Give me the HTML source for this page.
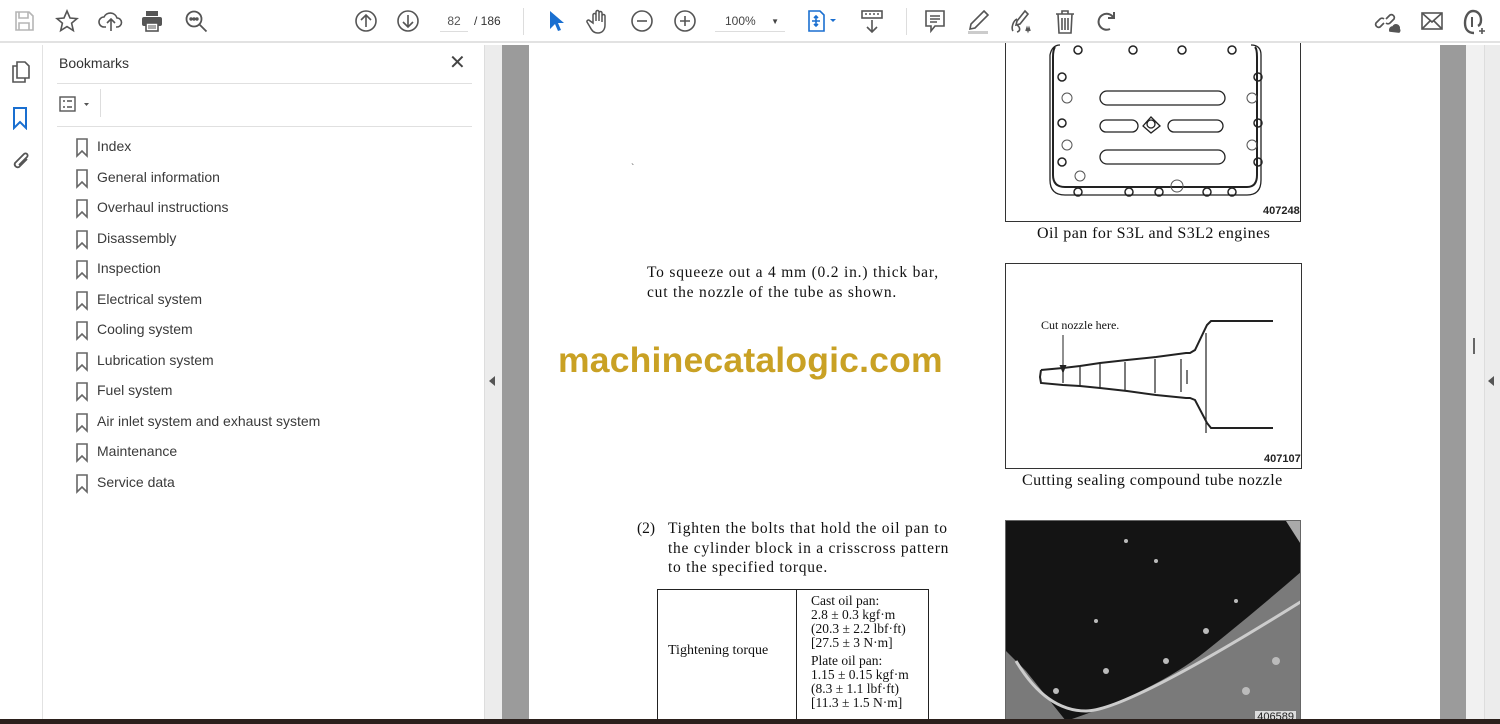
<!DOCTYPE html>
<html><head><meta charset="utf-8"><style>
*{margin:0;padding:0;box-sizing:border-box}
body{width:1500px;height:724px;overflow:hidden;background:#fff;font-family:"Liberation Sans",sans-serif;position:relative}
.abs{position:absolute}
.tb{top:0;left:0;width:1500px;height:43px;background:#fff;border-bottom:2px solid #e2e2e2}
.ic{position:absolute;top:9px}
.serif{font-family:"Liberation Serif",serif;color:#111}
.bm{position:absolute;left:75px;font-size:14px;color:#3a3a3a}
.bm svg{position:absolute;left:0;top:0}
.bm span{position:absolute;left:22px;top:0;white-space:nowrap}
</style></head><body>
<div class="abs tb">
<svg class="ic" style="left:12px" width="24" height="24" viewBox="0 0 24 24" fill="none" stroke="#b5b5b5" stroke-width="1.6"><path d="M4 3h13l4 4v14H4z"/><path d="M7 3v6h9V3M7 21v-7h10v7"/></svg>
<svg class="ic" style="left:55px" width="24" height="24" viewBox="0 0 24 24" fill="none" stroke="#555" stroke-width="1.6"><path d="M12 2l3 7 7 .6-5.4 4.6 1.7 7.3L12 17.6 5.7 21.5l1.7-7.3L2 9.6 9 9z"/></svg>
<svg class="ic" style="left:98px" width="26" height="24" viewBox="0 0 26 24" fill="none" stroke="#555" stroke-width="1.6"><path d="M8 18H6a5 5 0 010-10 7 7 0 0113 1 4 4 0 010 9h-1"/><path d="M13 22V11M9 14l4-4 4 4"/></svg>
<svg class="ic" style="left:140px" width="24" height="24" viewBox="0 0 24 24"><rect x="6" y="2" width="12" height="5" fill="#555"/><rect x="2" y="8" width="20" height="9" rx="2" fill="#555"/><rect x="6" y="14" width="12" height="8" fill="#fff" stroke="#555" stroke-width="1.6"/><path d="M8 17h8M8 19h8" stroke="#555"/></svg>
<svg class="ic" style="left:184px" width="26" height="26" viewBox="0 0 26 26" fill="none" stroke="#555" stroke-width="1.8"><circle cx="10" cy="10" r="7.5"/><path d="M15.5 15.5l7 7"/><circle cx="7" cy="10" r=".8" fill="#555"/><circle cx="10" cy="10" r=".8" fill="#555"/><circle cx="13" cy="10" r=".8" fill="#555"/></svg>
<svg class="ic" style="left:354px" width="24" height="24" viewBox="0 0 24 24" fill="none" stroke="#555" stroke-width="1.6"><circle cx="12" cy="12" r="10"/><path d="M12 18V6M7 11l5-5 5 5"/></svg>
<svg class="ic" style="left:396px" width="24" height="24" viewBox="0 0 24 24" fill="none" stroke="#555" stroke-width="1.6"><circle cx="12" cy="12" r="10"/><path d="M12 6v12M7 13l5 5 5-5"/></svg>
<div class="abs" style="left:440px;top:14px;width:28px;font-size:12px;color:#555;text-align:center;border-bottom:1px solid #ddd;padding-bottom:3px">82</div>
<div class="abs" style="left:474px;top:14px;font-size:12px;color:#333">/ 186</div>
<div class="abs" style="left:523px;top:8px;width:1px;height:27px;background:#ddd"></div>
<svg class="ic" style="left:548px" width="16" height="24" viewBox="0 0 16 24"><path d="M2 2v18l5-5 3 7 3-1-3-7h6z" fill="#1a6fd0"/></svg>
<svg class="ic" style="left:586px" width="24" height="26" viewBox="0 0 24 26" fill="none" stroke="#555" stroke-width="1.5"><path d="M7 14V6a1.5 1.5 0 013 0v6V3a1.5 1.5 0 013 0v9V4a1.5 1.5 0 013 0v9V7a1.5 1.5 0 013 0v9c0 5-3 8-7 8s-6-2-8-6l-3-5a1.5 1.5 0 012.5-1.5z"/></svg>
<svg class="ic" style="left:630px" width="24" height="24" viewBox="0 0 24 24" fill="none" stroke="#555" stroke-width="1.6"><circle cx="12" cy="12" r="10"/><path d="M7 12h10"/></svg>
<svg class="ic" style="left:673px" width="24" height="24" viewBox="0 0 24 24" fill="none" stroke="#555" stroke-width="1.6"><circle cx="12" cy="12" r="10"/><path d="M7 12h10M12 7v10"/></svg>
<div class="abs" style="left:715px;top:14px;width:70px;font-size:12px;color:#444;border-bottom:1px solid #ddd;padding:0 0 3px 10px">100%<span style="position:absolute;right:6px;font-size:8px;top:3px">▼</span></div>
<svg class="ic" style="left:806px" width="34" height="24" viewBox="0 0 34 24" fill="none" stroke="#1a6fd0" stroke-width="1.6"><path d="M3 2h11l4 4v16H3z"/><path d="M10 7v10M6 12h8M8 9l2-2 2 2M8 15l2 2 2-2"/><path d="M24 10l3 3 3-3z" fill="#1a6fd0" stroke="none"/></svg>
<svg class="ic" style="left:860px" width="24" height="26" viewBox="0 0 24 26" fill="none" stroke="#555" stroke-width="1.6"><rect x="2" y="2" width="20" height="7"/><path d="M5 5h2M9 5h2M13 5h2M17 5h2M12 11v12M7 18l5 5 5-5"/></svg>
<div class="abs" style="left:906px;top:8px;width:1px;height:27px;background:#ddd"></div>
<svg class="ic" style="left:924px" width="22" height="26" viewBox="0 0 22 26" fill="none" stroke="#555" stroke-width="1.6"><path d="M2 2h18v15H11l-4 5v-5H2z"/><path d="M6 7h10M6 10h10M6 13h7"/></svg>
<svg class="ic" style="left:966px" width="24" height="26" viewBox="0 0 24 26" fill="none" stroke="#555" stroke-width="1.6"><path d="M18 2l4 4L9 19l-5 1 1-5z"/><rect x="2" y="22" width="20" height="3" fill="#ccc" stroke="none"/></svg>
<svg class="ic" style="left:1008px" width="28" height="26" viewBox="0 0 28 26" fill="none" stroke="#555" stroke-width="1.6"><path d="M17 2l3 3-8 10-4 1 1-4zM5 22c-2-3 0-10 4-12M9 16c3 2 4 6 0 7M18 22l1-3 1 3 1-3 1 3"/></svg>
<svg class="ic" style="left:1054px" width="22" height="26" viewBox="0 0 22 26" fill="none" stroke="#555" stroke-width="1.6"><path d="M2 5h18M8 5V2h6v3M4 5l1 19h12l1-19M8 9v12M11 9v12M14 9v12"/></svg>
<svg class="ic" style="left:1095px" width="24" height="26" viewBox="0 0 24 26" fill="none" stroke="#555" stroke-width="2"><path d="M15 20a8 8 0 11 3-12"/><path d="M19 3v6h-6"/></svg>
<svg class="ic" style="left:1374px" width="28" height="26" viewBox="0 0 28 26" fill="none" stroke="#555" stroke-width="1.7"><path d="M10 14l-4 4a3 3 0 01-4-4l4-4a3 3 0 014 0M12 10l4-4a3 3 0 014 4l-4 4a3 3 0 01-4 0"/><path d="M16 22a3 3 0 013-4 3 3 0 016 2 2 2 0 010 3z" fill="#555"/></svg>
<svg class="ic" style="left:1420px" width="24" height="24" viewBox="0 0 24 24" fill="none" stroke="#555" stroke-width="1.6"><rect x="2" y="4" width="20" height="16"/><path d="M2 4l10 9 10-9M2 20l8-8M22 20l-8-8"/></svg>
<svg class="ic" style="left:1462px" width="26" height="26" viewBox="0 0 26 26" fill="none" stroke="#555" stroke-width="2.4"><path d="M12 24c-6 0-9-4-9-10S6 2 11 2s8 4 8 9c0 3-1 5-3 6"/><path d="M10 8v10" stroke-width="2"/><path d="M20 19v6M17 22h6" stroke-width="1.6"/></svg>
</div>
<div class="abs" style="left:0;top:45px;width:43px;height:679px;background:#fff;border-right:1px solid #e2e2e2"></div>
<svg class="abs" style="left:10px;top:60px" width="22" height="24" viewBox="0 0 22 24" fill="none" stroke="#555" stroke-width="1.6"><path d="M7 2h8l4 4v12H7z"/><path d="M7 6H3v16h12v-4"/></svg>
<svg class="abs" style="left:12px;top:106px" width="16" height="24" viewBox="0 0 16 24" fill="none" stroke="#1a6fd0" stroke-width="2"><path d="M2 2h12v20l-6-6-6 6z"/></svg>
<svg class="abs" style="left:10px;top:150px" width="22" height="24" viewBox="0 0 22 24" fill="none" stroke="#555" stroke-width="1.8"><path d="M17 9l-8 8a3 3 0 01-4-4l9-9a2 2 0 013 3l-8 8"/></svg>
<div class="abs" style="left:44px;top:45px;width:440px;height:679px;background:#fff"></div>
<div class="abs" style="left:59px;top:55px;font-size:14px;color:#333">Bookmarks</div>
<div class="abs" style="left:449px;top:50px;font-size:20px;color:#444">✕</div>
<div class="abs" style="left:57px;top:83px;width:415px;height:1px;background:#e0e0e0"></div>
<svg class="abs" style="left:59px;top:95px" width="32" height="18" viewBox="0 0 32 18" fill="none" stroke="#555" stroke-width="1.4"><rect x="1" y="2" width="15" height="14"/><path d="M4 6h2M8 6h5M4 12h2M8 12h5"/><path d="M25 8l2.5 3 2.5-3z" fill="#555" stroke="none"/></svg>
<div class="abs" style="left:100px;top:89px;width:1px;height:28px;background:#ddd"></div>
<div class="abs" style="left:57px;top:126px;width:415px;height:1px;background:#e0e0e0"></div>
<div id="bms"></div>
<div class="abs" style="left:484px;top:45px;width:18px;height:679px;background:#ececec;border-left:1px solid #ddd"></div>
<div class="abs" style="left:489px;top:376px;width:0;height:0;border-top:5px solid transparent;border-bottom:5px solid transparent;border-right:6px solid #555"></div>
<div class="abs" style="left:502px;top:45px;width:27px;height:679px;background:#9b9b9b"></div>
<div class="abs" style="left:529px;top:45px;width:911px;height:679px;background:#fff"></div>
<div class="abs" style="left:1440px;top:45px;width:26px;height:679px;background:#9b9b9b"></div>
<div class="abs" style="left:1466px;top:45px;width:18px;height:679px;background:#f1f1f1"></div>
<div class="abs" style="left:1473px;top:338px;width:2px;height:16px;background:#666"></div>
<div class="abs" style="left:1484px;top:45px;width:16px;height:679px;background:#ececec;border-left:1px solid #ddd"></div>
<div class="abs" style="left:1488px;top:376px;width:0;height:0;border-top:5px solid transparent;border-bottom:5px solid transparent;border-right:6px solid #555"></div>
<div class="abs" style="left:1005px;top:43px;width:296px;height:179px;border:1px solid #333;border-top:none"></div>
<svg class="abs" style="left:1005px;top:43px" width="296" height="179" viewBox="0 0 296 179" fill="none" stroke="#222" stroke-width="1.3">
<path d="M55 2q-8 0-10 10v125q0 15 15 15h182q14 0 14-15V12q0-10-10-10" />
<path d="M50 4q-2 3-2 10v118q0 12 12 12h182q10 0 10-12V14q0-8-2-10" stroke-width="2"/>
<rect x="95" y="48" width="125" height="14" rx="7"/><rect x="95" y="107" width="125" height="14" rx="7"/>
<rect x="95" y="77" width="38" height="12" rx="6"/><rect x="163" y="77" width="55" height="12" rx="6"/>
<path d="M138 83l8-9 9 9-9 7z"/><circle cx="146" cy="81" r="4"/>
<g stroke-width="1.5"><circle cx="57" cy="34" r="4"/><circle cx="57" cy="80" r="4"/><circle cx="57" cy="119" r="4"/><circle cx="253" cy="34" r="4"/><circle cx="253" cy="80" r="4"/><circle cx="253" cy="119" r="4"/><circle cx="73" cy="149" r="4"/><circle cx="124" cy="149" r="4"/><circle cx="154" cy="149" r="4"/><circle cx="202" cy="149" r="4"/><circle cx="227" cy="149" r="4"/><circle cx="128" cy="7" r="4"/><circle cx="177" cy="7" r="4"/><circle cx="227" cy="7" r="4"/><circle cx="73" cy="7" r="4"/></g>
<g stroke="#555" stroke-width="1"><circle cx="62" cy="55" r="5"/><circle cx="62" cy="102" r="5"/><circle cx="247" cy="55" r="5"/><circle cx="247" cy="102" r="5"/><circle cx="172" cy="143" r="6"/><circle cx="75" cy="133" r="5"/></g>
</svg>
<div class="abs" style="left:1263px;top:205px;font-size:11px;font-weight:bold;color:#222">407248</div>
<div class="abs serif" style="left:1037px;top:225px;font-size:16px;letter-spacing:0.45px">Oil pan for S3L and S3L2 engines</div>
<div class="abs" style="left:631px;top:163px;font-size:10px;color:#555">`</div>
<div class="abs serif" style="left:647px;top:263px;font-size:15.5px;line-height:20px;letter-spacing:0.8px">To squeeze out a 4 mm (0.2 in.) thick bar,<br>cut the nozzle of the tube as shown.</div>
<div class="abs" style="left:1005px;top:263px;width:297px;height:206px;border:1px solid #333"></div>
<svg class="abs" style="left:1005px;top:263px" width="297" height="206" viewBox="0 0 297 206" fill="none" stroke="#222" stroke-width="2">
<path d="M36 107l-1 7 1 6 22 2 17 1 20 2 27 3 29 4 30 3h4l5 2 12 23 4 5h62M36 107l22-2 17-2 20-3 27-3 29-3 30-4h4l5-3 12-25 4-4h62"/>
<path d="M58 106v14M75 104v19M95 101v24M120 99v29M150 96v34M176 96v33M182 107v14M201 70v100" stroke-width="1.2"/>
<path d="M58 72v35" stroke-width="1"/><path d="M56 103l2 5 2-5z" fill="#222"/>
</svg>
<div class="abs serif" style="left:1041px;top:318px;font-size:12px">Cut nozzle here.</div>
<div class="abs" style="left:1264px;top:453px;font-size:11px;font-weight:bold;color:#222">407107</div>
<div class="abs serif" style="left:1022px;top:472px;font-size:16px;letter-spacing:0.4px">Cutting sealing compound tube nozzle</div>
<div class="abs" style="left:558px;top:340px;font-size:35.5px;font-weight:bold;color:#c9a124;letter-spacing:0.2px">machinecatalogic.com</div>
<div class="abs serif" style="left:637px;top:519px;font-size:15.5px;line-height:19.5px">(2)</div>
<div class="abs serif" style="left:668px;top:519px;font-size:15.5px;line-height:19.5px;letter-spacing:0.75px">Tighten the bolts that hold the oil pan to<br>the cylinder block in a crisscross pattern<br>to the specified torque.</div>
<div class="abs" style="left:657px;top:589px;width:272px;height:135px;border:1.5px solid #222"></div>
<div class="abs" style="left:796px;top:589px;width:1px;height:135px;background:#222"></div>
<div class="abs serif" style="left:668px;top:643px;font-size:14px">Tightening torque</div>
<div class="abs serif" style="left:811px;top:594px;font-size:13.5px;line-height:14px">Cast oil pan:<br>2.8 ± 0.3 kgf·m<br>(20.3 ± 2.2 lbf·ft)<br>[27.5 ± 3 N·m]</div>
<div class="abs serif" style="left:811px;top:654px;font-size:13.5px;line-height:14px">Plate oil pan:<br>1.15 ± 0.15 kgf·m<br>(8.3 ± 1.1 lbf·ft)<br>[11.3 ± 1.5 N·m]</div>
<div class="abs" style="left:1005px;top:520px;width:296px;height:204px;background:#141414;border:1px solid #666;overflow:hidden">
<svg width="296" height="204" viewBox="0 0 296 204"><path d="M0 130L0 204H296V50Q250 90 200 130T60 200L20 150Z" fill="#7a7a7a"/><path d="M10 140Q40 190 80 190T296 80" stroke="#ccc" stroke-width="3" fill="none"/><path d="M280 0L296 0 296 25z" fill="#aaa"/>
<g fill="#bbb"><circle cx="120" cy="20" r="2"/><circle cx="150" cy="40" r="2"/><circle cx="90" cy="100" r="2"/><circle cx="200" cy="110" r="3"/><circle cx="230" cy="80" r="2"/><circle cx="100" cy="150" r="3"/><circle cx="160" cy="140" r="3"/><circle cx="50" cy="170" r="3"/><circle cx="270" cy="140" r="4"/><circle cx="240" cy="170" r="4"/></g></svg>
<div style="position:absolute;right:4px;bottom:0;font-size:11px;color:#222;background:#ddd;padding:0 2px">406589</div>
</div>
<div class="abs" style="left:0;top:719px;width:1500px;height:5px;background:#2b201c"></div>
<script>
var n=["Index","General information","Overhaul instructions","Disassembly","Inspection","Electrical system","Cooling system","Lubrication system","Fuel system","Air inlet system and exhaust system","Maintenance","Service data"];
var h="";for(var i=0;i<n.length;i++){h+='<div class="bm" style="top:'+(138+i*30.5)+'px"><svg width="14" height="20" viewBox="0 0 14 20" fill="none" stroke="#666" stroke-width="1.6"><path d="M2 1h10v17l-5-5-5 5z"/></svg><span>'+n[i]+'</span></div>';}
document.getElementById("bms").innerHTML=h;
</script>
</body></html>
